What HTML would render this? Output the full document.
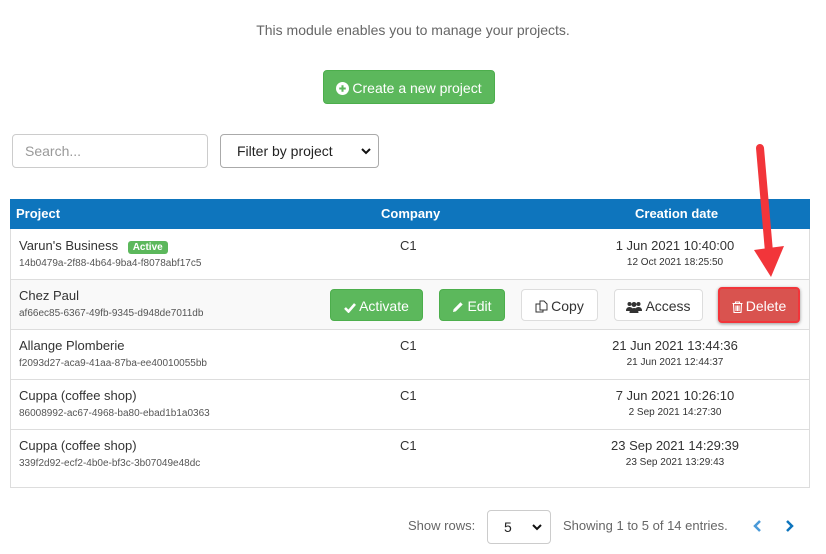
<!DOCTYPE html>
<html><head><style>
body{margin:0;width:826px;height:554px;background:#fff;font-family:"Liberation Sans",sans-serif;color:#333;position:relative;overflow:hidden}
.a{position:absolute}
.btn{position:absolute;height:32px;border-radius:4px;font-size:14px;line-height:32px;text-align:center;box-sizing:border-box;white-space:nowrap}
.btn svg{vertical-align:-2px;margin-right:3px}
.g{background:#5cb85c;color:#fff;border:1px solid #4cae4c}
.w{background:#fff;color:#333;border:1px solid #ddd}
.name{font-size:13px;color:#333}
.id{font-size:10px;color:#555}
.c{font-size:13px;text-align:center}
.rowline{position:absolute;left:10px;width:800px;height:1px;background:#ddd}
</style></head><body>
<div class="a" style="left:0;width:826px;top:22px;text-align:center;font-size:14px;color:#666">This module enables you to manage your projects.</div>
<div class="btn g" style="left:323px;top:70px;width:172px;height:34px;line-height:34px"><svg width="13" height="13" viewBox="0 0 14 14"><circle cx="7" cy="7" r="7" fill="#fff"/><path d="M7 3.5V10.5M3.5 7H10.5" stroke="#5cb85c" stroke-width="2.2"/></svg>Create a new project</div>
<div class="a" style="left:12px;top:134px;width:196px;height:34px;border:1px solid #ccc;border-radius:4px;box-sizing:border-box;padding-left:12px;line-height:32px;font-size:14px;color:#999">Search...</div>
<div class="a" style="left:220px;top:134px;width:159px;height:34px;border:1px solid #aaa;border-radius:4px;box-sizing:border-box;padding-left:16px;line-height:32px;font-size:14px;color:#222">Filter by project <svg style="position:absolute;right:7px;top:13px" width="10" height="7"><path d="M1 1L5 5L9 1" stroke="#111" stroke-width="2" fill="none"/></svg></div>
<div class="a" style="left:10px;top:199px;width:800px;height:289px;border:1px solid #ddd;box-sizing:border-box"></div>
<div class="a" style="left:10px;top:199px;width:800px;height:30px;background:#0e75bd;color:#fff;font-weight:bold;font-size:13px;line-height:30px">
<span class="a" style="left:6px">Project</span><span class="a" style="left:371px">Company</span><span class="a" style="left:625px">Creation date</span></div>
<div class="a" style="left:11px;top:279px;width:798px;height:50px;background:#f9f9f9"></div>
<div class="rowline" style="top:279px"></div><div class="rowline" style="top:329px"></div><div class="rowline" style="top:379px"></div><div class="rowline" style="top:429px"></div>

<div class="a name" style="left:19px;top:238px">Varun's Business <span style="display:inline-block;background:#5cb85c;color:#fff;font-size:10px;font-weight:bold;padding:1px 5px;border-radius:3px;margin-left:6px">Active</span></div>
<div class="a id" style="left:19px;top:258px">14b0479a-2f88-4b64-9ba4-f8078abf17c5</div>
<div class="a c" style="left:400px;top:238px">C1</div>
<div class="a c" style="left:575px;width:200px;top:238px">1 Jun 2021 10:40:00</div>
<div class="a c" style="left:575px;width:200px;top:257px;font-size:10px">12 Oct 2021 18:25:50</div>

<div class="a name" style="left:19px;top:288px">Chez Paul</div>
<div class="a id" style="left:19px;top:308px">af66ec85-6367-49fb-9345-d948de7011db</div>
<div class="btn g" style="left:330px;top:289px;width:93px"><svg width="12" height="11" viewBox="0 0 12 11"><path d="M1 6L4.5 9.5L11 2" stroke="#fff" stroke-width="2.6" fill="none"/></svg>Activate</div>
<div class="btn g" style="left:439px;top:289px;width:66px"><svg width="12" height="12" viewBox="0 0 12 12"><path d="M1 11L1.6 8.2L8.5 1.3L10.7 3.5L3.8 10.4Z" fill="#fff"/></svg>Edit</div>
<div class="btn w" style="left:521px;top:289px;width:77px"><svg width="13" height="13" viewBox="0 0 13 13"><path d="M1 4H5V1H9L12 4V10H8V12H1Z M5 4V10H8" stroke="#333" stroke-width="1" fill="none"/></svg>Copy</div>
<div class="btn w" style="left:614px;top:289px;width:89px"><svg width="16" height="12" viewBox="0 0 16 12"><circle cx="3.5" cy="3" r="2" fill="#333"/><circle cx="12.5" cy="3" r="2" fill="#333"/><circle cx="8" cy="3.5" r="2.5" fill="#333"/><path d="M0 10Q0 6 3.5 6Q7 6 7 10Z M9 10Q9 6 12.5 6Q16 6 16 10Z M3.5 12Q3.5 7 8 7Q12.5 7 12.5 12Z" fill="#333"/></svg>Access</div>
<div class="btn" style="left:718px;top:287px;width:82px;height:36px;line-height:34px;background:#d9534f;color:#fff;border:2px solid #f2353a;box-shadow:0 1px 3px rgba(0,0,0,.4)"><svg width="11" height="12" viewBox="0 0 11 12"><path d="M0.5 2.5H10.5M3.5 2.5V1H7.5V2.5M1.5 2.5L2 11.5H9L9.5 2.5M4 4.5V10M5.5 4.5V10M7 4.5V10" stroke="#fff" stroke-width="1.1" fill="none"/></svg>Delete</div>

<div class="a name" style="left:19px;top:338px">Allange Plomberie</div>
<div class="a id" style="left:19px;top:358px">f2093d27-aca9-41aa-87ba-ee40010055bb</div>
<div class="a c" style="left:400px;top:338px">C1</div>
<div class="a c" style="left:575px;width:200px;top:338px">21 Jun 2021 13:44:36</div>
<div class="a c" style="left:575px;width:200px;top:357px;font-size:10px">21 Jun 2021 12:44:37</div>

<div class="a name" style="left:19px;top:388px">Cuppa (coffee shop)</div>
<div class="a id" style="left:19px;top:408px">86008992-ac67-4968-ba80-ebad1b1a0363</div>
<div class="a c" style="left:400px;top:388px">C1</div>
<div class="a c" style="left:575px;width:200px;top:388px">7 Jun 2021 10:26:10</div>
<div class="a c" style="left:575px;width:200px;top:407px;font-size:10px">2 Sep 2021 14:27:30</div>

<div class="a name" style="left:19px;top:438px">Cuppa (coffee shop)</div>
<div class="a id" style="left:19px;top:458px">339f2d92-ecf2-4b0e-bf3c-3b07049e48dc</div>
<div class="a c" style="left:400px;top:438px">C1</div>
<div class="a c" style="left:575px;width:200px;top:438px">23 Sep 2021 14:29:39</div>
<div class="a c" style="left:575px;width:200px;top:457px;font-size:10px">23 Sep 2021 13:29:43</div>

<div class="a" style="left:408px;top:518px;font-size:13px;color:#666">Show rows:</div>
<div class="a" style="left:487px;top:510px;width:64px;height:34px;border:1px solid #ccc;border-radius:4px;box-sizing:border-box;font-size:14px;line-height:32px;padding-left:16px;color:#222">5<svg style="position:absolute;right:8px;top:13px" width="10" height="7"><path d="M1 1L5 5L9 1" stroke="#111" stroke-width="2" fill="none"/></svg></div>
<div class="a" style="left:563px;top:518px;font-size:13px;color:#666">Showing 1 to 5 of 14 entries.</div>
<svg class="a" style="left:750px;top:518px" width="50" height="16"><path d="M10 3 L5 8 L10 13" stroke="#4a9ad8" stroke-width="2.5" fill="none"/><path d="M37 3 L42 8 L37 13" stroke="#0e75bd" stroke-width="2.5" fill="none"/></svg>
<svg class="a" style="left:0;top:0" width="826" height="554"><line x1="760" y1="148" x2="769" y2="252" stroke="#f2353a" stroke-width="8" stroke-linecap="round"/><polygon points="754,250 784,246 771,277" fill="#f2353a"/></svg>
</body></html>
